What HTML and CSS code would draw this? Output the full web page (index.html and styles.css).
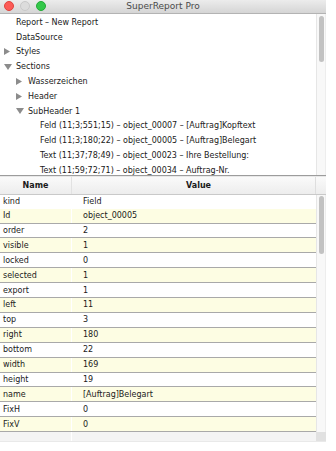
FILE: index.html
```html
<!DOCTYPE html>
<html lang="en">
<head>
    <meta charset="UTF-8">
    <meta name="viewport" content="width=device-width, initial-scale=1.0">
    <title>SuperReport Pro</title>
    <link rel="stylesheet" href="styles.css">
</head>
<body>
    <div class="window">
        <!-- Title bar -->
        <div class="titlebar">
            <div class="lights">
                <span class="light close"></span>
                <span class="light min"></span>
                <span class="light max"></span>
            </div>
            <div class="title">SuperReport Pro</div>
        </div>

        <!-- Report tree -->
        <div class="tree-pane">
            <div class="tree">
                <div class="node lvl0"><span class="arrow"></span>Report – New Report</div>
                <div class="node lvl0"><span class="arrow"></span>DataSource</div>
                <div class="node lvl0"><span class="arrow"><svg width="6" height="7" viewBox="0 0 6 7"><polygon points="0,0 6,3.5 0,7"/></svg></span>Styles</div>
                <div class="node lvl0"><span class="arrow"><svg width="8" height="6" viewBox="0 0 8 6"><polygon points="0,0 8,0 4,6"/></svg></span>Sections</div>
                <div class="node lvl1"><span class="arrow"><svg width="6" height="7" viewBox="0 0 6 7"><polygon points="0,0 6,3.5 0,7"/></svg></span>Wasserzeichen</div>
                <div class="node lvl1"><span class="arrow"><svg width="6" height="7" viewBox="0 0 6 7"><polygon points="0,0 6,3.5 0,7"/></svg></span>Header</div>
                <div class="node lvl1"><span class="arrow"><svg width="8" height="6" viewBox="0 0 8 6"><polygon points="0,0 8,0 4,6"/></svg></span>SubHeader 1</div>
                <div class="node lvl2"><span class="arrow"></span>Feld (11;3;551;15) – object_00007 – [Auftrag]Kopftext</div>
                <div class="node lvl2"><span class="arrow"></span>Feld (11;3;180;22) – object_00005 – [Auftrag]Belegart</div>
                <div class="node lvl2"><span class="arrow"></span>Text (11;37;78;49) – object_00023 – Ihre Bestellung:</div>
                <div class="node lvl2"><span class="arrow"></span>Text (11;59;72;71) – object_00034 – Auftrag-Nr.</div>
            </div>
            <div class="scrollbar"><div class="thumb tree-thumb"></div></div>
        </div>

        <div class="split"></div>

        <!-- Property table -->
        <div class="table-head">
            <div class="th name-col">Name</div>
            <div class="th value-col">Value</div>
            <div class="th corner"></div>
        </div>
        <div class="table-body">
            <div class="rows">
                <div class="row"><div class="cell name-col">kind</div><div class="cell value-col">Field</div></div>
                <div class="row"><div class="cell name-col">Id</div><div class="cell value-col">object_00005</div></div>
                <div class="row"><div class="cell name-col">order</div><div class="cell value-col">2</div></div>
                <div class="row"><div class="cell name-col">visible</div><div class="cell value-col">1</div></div>
                <div class="row"><div class="cell name-col">locked</div><div class="cell value-col">0</div></div>
                <div class="row"><div class="cell name-col">selected</div><div class="cell value-col">1</div></div>
                <div class="row"><div class="cell name-col">export</div><div class="cell value-col">1</div></div>
                <div class="row"><div class="cell name-col">left</div><div class="cell value-col">11</div></div>
                <div class="row"><div class="cell name-col">top</div><div class="cell value-col">3</div></div>
                <div class="row"><div class="cell name-col">right</div><div class="cell value-col">180</div></div>
                <div class="row"><div class="cell name-col">bottom</div><div class="cell value-col">22</div></div>
                <div class="row"><div class="cell name-col">width</div><div class="cell value-col">169</div></div>
                <div class="row"><div class="cell name-col">height</div><div class="cell value-col">19</div></div>
                <div class="row"><div class="cell name-col">name</div><div class="cell value-col">[Auftrag]Belegart</div></div>
                <div class="row"><div class="cell name-col">FixH</div><div class="cell value-col">0</div></div>
                <div class="row"><div class="cell name-col">FixV</div><div class="cell value-col">0</div></div>
            </div>
            <div class="scrollbar"><div class="thumb table-thumb"></div></div>
        </div>
        <div class="table-foot">
            <div class="foot name-col"></div>
            <div class="foot value-col"></div>
            <div class="foot corner"></div>
        </div>
    </div>
</body>
</html>
```

FILE: styles.css
```css
body {
    margin: 0;
    background-color: #fff;
    font-family: "DejaVu Sans", Verdana, sans-serif;
    font-size: 8px;
    color: #1a1a1a;
}
.window {
    width: 326px;
    height: 442px;
    display: flex;
    flex-direction: column;
    background-color: #fff;
}

/* Title bar */
.titlebar {
    height: 14px;
    box-sizing: border-box;
    display: grid;
    grid-template-columns: 1fr auto 1fr;
    align-items: center;
    background: linear-gradient(#ececec, #d5d5d5);
    border-bottom: 1px solid #b3b3b3;
}
.lights {
    display: flex;
    gap: 6px;
    padding-left: 4px;
}
.light {
    width: 10px;
    height: 10px;
    box-sizing: border-box;
    border-radius: 50%;
}
.light.close {
    background-color: #fc5b57;
    border: 1px solid #e0443e;
}
.light.min {
    background-color: #dcdcdc;
    border: 1px solid #c9c9c9;
}
.light.max {
    background-color: #34c84a;
    border: 1px solid #24a938;
}
.title {
    font-size: 9px;
    color: #4a4a4a;
}

/* Tree */
.tree-pane {
    height: 162px;
    display: flex;
    overflow: hidden;
}
.tree {
    flex: 1;
    padding-top: 1px;
}
.node {
    height: 14.8px;
    display: flex;
    align-items: center;
    white-space: nowrap;
}
.node.lvl0 { padding-left: 4px; }
.node.lvl1 { padding-left: 16px; }
.node.lvl2 { padding-left: 28px; }
.arrow {
    width: 12px;
    flex-shrink: 0;
    display: flex;
    align-items: center;
}
.arrow svg {
    fill: #8c8c8c;
}

.scrollbar {
    width: 10px;
    box-sizing: border-box;
    background-color: #f8f8f8;
    border-left: 1px solid #e6e6e6;
    border-right: 1px solid #ededed;
    padding: 2px 1px 0 2px;
}
.thumb {
    width: 5px;
    border-radius: 3px;
    background-color: #c2c2c2;
}
.tree-thumb { height: 46px; }
.table-thumb {
    height: 58px;
    margin-top: -1px;
}

.split {
    height: 1px;
    background-color: #9c9c9c;
}

/* Property table */
.table-head {
    height: 19px;
    box-sizing: border-box;
    display: flex;
    background: linear-gradient(#fafafa, #ededed);
    border-top: 1px solid #e8e8e8;
    border-bottom: 1px solid #c9c9c9;
    font-weight: bold;
}
.th {
    display: flex;
    align-items: center;
    justify-content: center;
}
.name-col {
    width: 71px;
    flex-shrink: 0;
    border-right: 1px solid #fff;
}
.th.name-col {
    border-right-color: #e2e2e2;
}
.value-col {
    flex: 1;
}
.th.value-col {
    padding-left: 10px;
}
.th.corner {
    width: 10px;
    border-left: 1px solid #dedede;
}

.table-body {
    display: flex;
}
.rows {
    flex: 1;
}
.row {
    height: 14.9px;
    box-sizing: border-box;
    display: flex;
    border-bottom: 1px solid #a9a9a9;
}
.row:first-child {
    height: 13.9px;
    border-bottom: none;
}
.row:nth-child(even) {
    background-color: #fdfde3;
}
.cell {
    display: flex;
    align-items: center;
    white-space: nowrap;
}
.cell.name-col {
    padding-left: 3px;
    box-sizing: border-box;
    width: 72px;
}
.cell.value-col {
    padding-left: 11px;
}

.table-foot {
    height: 9px;
    display: flex;
    background-color: #f4f4f4;
    border-bottom: 1px solid #e9e9e9;
}
.foot.corner {
    width: 10px;
    background-color: #e1e1e1;
}
```
